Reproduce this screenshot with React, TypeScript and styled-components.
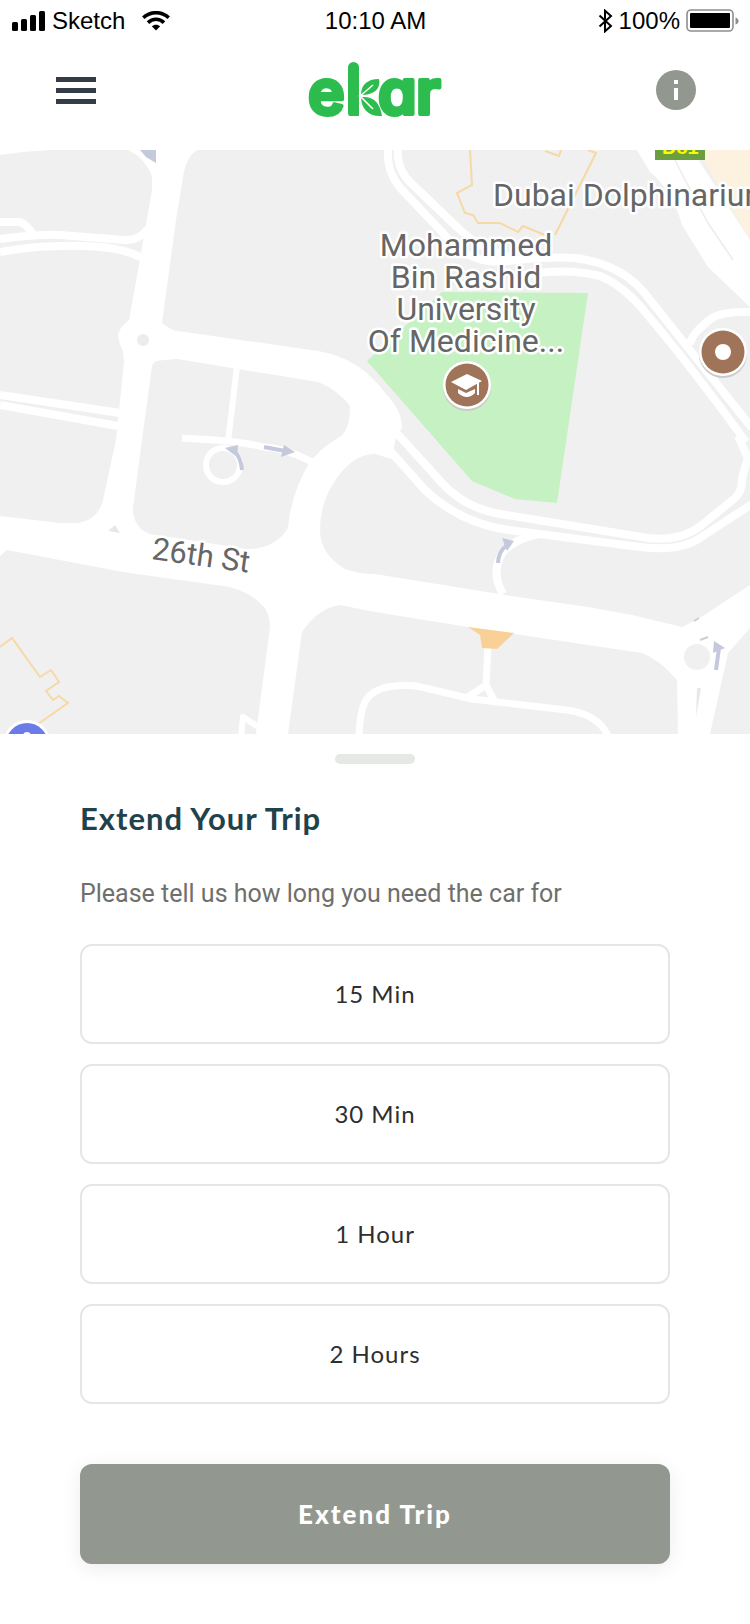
import React, { useState } from "react";
import styled, { createGlobalStyle, css } from "styled-components";

const color = {
  ink: "#2e2e2e",
  heading: "#1f424b",
  body: "#6f6f6c",
  brand: "#2dbc4e",
  muted: "#929790",
  line: "#e6e6e6",
  land: "#f0f0f0",
  road: "#ffffff",
  park: "#c5f1c3",
  arrow: "#c4c9dc",
  outline: "#f6d9a4",
  pin: "#a07458",
};

const GlobalStyle = createGlobalStyle`
  *, *::before, *::after { box-sizing: border-box; }
  body {
    margin: 0;
    background: #ffffff;
    color: ${color.ink};
    font-family: Lato, "Noto Sans", sans-serif;
  }
`;

const Screen = styled.div`
  display: flex;
  flex-direction: column;
  min-height: 100vh;
`;

const StatusBar = styled.div`
  display: grid;
  grid-template-columns: 1fr auto 1fr;
  align-items: center;
  height: 42px;
  padding: 0 11px 0 12px;
  color: #000000;
  font: 24px/42px "Liberation Sans", Arial, sans-serif;
`;

const StatusGroup = styled.div<{ $end?: boolean }>`
  display: flex;
  align-items: center;
  gap: 7px;
  ${(p) =>
    p.$end &&
    css`
      justify-content: flex-end;
      gap: 6px;
    `}
`;

const Carrier = styled.span`
  margin-right: 10px;
`;

const NavBar = styled.header`
  display: grid;
  grid-template-columns: 1fr auto 1fr;
  align-items: center;
  height: 108px;
  padding: 0 54px 12px;
`;

const IconButton = styled.button<{ $end?: boolean }>`
  display: flex;
  padding: 0;
  border: 0;
  background: none;
  cursor: pointer;
  justify-self: ${(p) => (p.$end ? "end" : "start")};
  margin-left: 2px;
`;

const LogoMark = styled.svg`
  display: block;
  overflow: visible;
`;

const Wordmark = styled.text`
  font-family: Inter, sans-serif;
  font-size: 62px;
  font-weight: 600;
  font-feature-settings: "cv11";
  fill: ${color.brand};
  stroke: ${color.brand};
  stroke-width: 4px;
  stroke-linejoin: round;
`;

const MapView = styled.svg`
  display: block;
  width: 100%;
  height: auto;
  background: ${color.land};
`;

const MapLabel = styled.text<{ $street?: boolean }>`
  font-family: Roboto, sans-serif;
  font-size: ${(p) => (p.$street ? 31 : 32)}px;
  fill: #666666;
  stroke: #ffffff;
  stroke-width: 5px;
  stroke-linejoin: round;
  paint-order: stroke;
`;

const RoadSign = styled.text`
  font-family: "Liberation Sans", Arial, sans-serif;
  font-size: 20px;
  font-weight: 700;
  fill: #fdf900;
`;

const Sheet = styled.main`
  display: flex;
  flex-direction: column;
  padding: 20px 80px 60px;
`;

const Handle = styled.div`
  align-self: center;
  width: 80px;
  height: 10px;
  border-radius: 5px;
  background: #e5e8e4;
`;

const Title = styled.h1`
  margin: 34px 0 0;
  color: ${color.heading};
  font-size: 31px;
  line-height: 40px;
  font-weight: 700;
  letter-spacing: 1px;
`;

const Prompt = styled.p`
  margin: 38px 0 0;
  color: ${color.body};
  font-family: Roboto, sans-serif;
  font-size: 25px;
  line-height: 36px;
`;

const Options = styled.div`
  display: flex;
  flex-direction: column;
  gap: 20px;
  margin-top: 32px;
`;

const buttonBase = css`
  height: 100px;
  border-radius: 12px;
  font-family: inherit;
  line-height: 32px;
  text-align: center;
  cursor: pointer;
`;

const OptionButton = styled.button`
  ${buttonBase}
  border: 2px solid ${color.line};
  background: #ffffff;
  color: ${color.ink};
  font-size: 24px;
  font-weight: 400;
  letter-spacing: 1px;

  &[aria-pressed="true"] {
    border-color: ${color.brand};
  }
`;

const SubmitButton = styled.button`
  ${buttonBase}
  margin-top: 60px;
  border: 0;
  background: ${color.muted};
  color: #ffffff;
  font-size: 26px;
  font-weight: 900;
  letter-spacing: 2px;
  box-shadow: 0 4px 20px rgba(0, 0, 0, 0.08);
`;

const SignalIcon = () => (
  <svg width="33" height="20" viewBox="0 0 33 20" aria-hidden="true">
    <rect x="0" y="11" width="6" height="9" rx="1.5" />
    <rect x="9" y="8" width="6" height="12" rx="1.5" />
    <rect x="18" y="4" width="6" height="16" rx="1.5" />
    <rect x="27" y="0" width="6" height="20" rx="1.5" />
  </svg>
);

const WifiIcon = () => (
  <svg width="28" height="20" viewBox="0 0 28 20" aria-hidden="true">
    <g fill="none" stroke="#000" strokeWidth="3.6">
      <path d="M1.3 6.8C8.5 0 19.5 0 26.7 6.8" />
      <path d="M6 11.6C10.5 7.2 17.5 7.2 22 11.6" />
    </g>
    <path d="M14 19.6L9.8 15.3C12.2 13.2 15.8 13.2 18.2 15.3Z" />
  </svg>
);

const BluetoothIcon = () => (
  <svg width="15" height="24" viewBox="0 0 15 24" aria-hidden="true">
    <path
      d="M1.5 6.5L13 17L7 22.3V1.7L13 7L1.5 17.5"
      fill="none"
      stroke="#000"
      strokeWidth="2"
    />
  </svg>
);

const BatteryIcon = () => (
  <svg width="53" height="24" viewBox="0 0 53 24" aria-hidden="true">
    <rect x="1" y="1" width="46" height="21" rx="4" fill="none" stroke="#8e8e8e" strokeWidth="1.6" />
    <rect x="4" y="4" width="40" height="15" rx="1" />
    <path d="M49.5 8.5Q52.5 9.5 52.5 12Q52.5 14.5 49.5 15.5Z" fill="#8e8e8e" />
  </svg>
);

const MenuIcon = () => (
  <svg width="40" height="27" viewBox="0 0 40 27" fill="#343c48" aria-hidden="true">
    <rect width="40" height="5" />
    <rect y="11" width="40" height="5" />
    <rect y="22" width="40" height="5" />
  </svg>
);

const InfoIcon = () => (
  <svg width="40" height="40" viewBox="0 0 40 40" aria-hidden="true">
    <circle cx="20" cy="20" r="20" fill={color.muted} />
    <rect x="18" y="10" width="4" height="4" fill="#fff" />
    <rect x="18" y="18" width="4" height="12" fill="#fff" />
  </svg>
);

const Logo = () => (
  <LogoMark width="136" height="58" viewBox="0 0 136 58" role="img" aria-label="ekar">
    <Wordmark x="1 39" y="53">
      ek
    </Wordmark>
    <rect x="52" y="2" width="30" height="56" fill="#fff" />
    <rect x="41" y="1" width="11" height="54" rx="5.5" fill={color.brand} />
    <g fill={color.brand}>
      <path d="M54 34C54 24 60 18 72 18C74 27 68 34 54 34Z" />
      <path d="M54 36C67 35 73 42 75 55C62 56 54 48 54 36Z" />
    </g>
    <path d="M52 36L66 24M52 34L66 48" stroke="#fff" strokeWidth="1.6" />
    <Wordmark x="71 109" y="53">
      ar
    </Wordmark>
  </LogoMark>
);

const CityMap = () => (
  <MapView viewBox="0 150 750 584" role="img" aria-label="Map around 26th St">
    <rect y="150" width="750" height="584" fill={color.land} />
    <path d="M442 292L588 293L557 503L515 499L472 481L367 361Z" fill={color.park} />

    <g fill={color.road}>
      <path d="M0 155Q25 151 50 150H0Z" />
      <path d="M128 150Q145 158 152 176V190L139 265L129 320Q118 328 118 337Q120 345 123 352L124 362L116 440L103 500Q98 520 78 523H60L0 516V556L7 550L123 572L230 587Q250 593 260 603Q270 611 270 627L256 734H288L302 632Q318 608 340 605L375 612L468 627L642 653Q660 660 677 680L678 734H710L728 653L750 628V585L712 610Q698 620 682 627L632 615L588 607L518 597L375 574Q358 574 345 569Q320 554 320 530Q320 495 345 468Q360 453 375 454L392 459L396 436L402 428Q402 410 385 393Q360 358 318 351L178 331Q170 330 162 323L176 220L183 177Q186 157 197 150Z" />
      <path d="M637 150L650 172Q672 190 682 225L708 267L750 307V240L692 150Z" />
    </g>
    <g fill={color.land}>
      <path d="M152 366Q153 360 165 360L177 359L318 382Q338 390 350 406Q350 432 338 438Q320 448 308 465Q291 495 288 528Q275 549 247 549L150 534Q133 528 133 508L142 440Z" />
      <circle cx="143" cy="340" r="6" fill="#ececec" />
      <circle cx="697" cy="657" r="13" />
      <path d="M697 688H701L696 717Z" fill="#e8e8e8" />
      <path d="M108 531L115 525L120 533Z" fill="#e8e8e8" />
    </g>
    <path d="M698 150H750V240Z" fill="#fdf2e0" />
    <path d="M675 160Q690 190 708 223L733 260" fill="none" stroke="#ececec" strokeWidth="1.5" />

    <g fill="none" stroke={color.road} strokeWidth="8" strokeLinejoin="round">
      <path d="M0 222H20Q26 224 34 235" />
      <path d="M0 239Q40 234 60 235L125 240Q138 241 148 229" />
      <path d="M0 252Q50 243 100 247Q125 249 143 258" />
      <path d="M0 395L120 413M0 405L118 426" />
      <path d="M237 366L228 442" strokeWidth="6" />
      <path d="M182 438L215 440Q250 443 263 447Q285 448 312 462" strokeWidth="7" />
      <circle cx="223" cy="465" r="17" strokeWidth="6" />
      <path d="M388 148Q386 175 405 193L442 232Q465 262 500 262Q545 256 575 258Q625 264 650 300L752 428" />
      <path d="M398 148Q396 170 412 184L458 228Q480 250 520 260" />
      <path d="M510 278Q560 266 600 276Q624 286 645 312Q690 365 746 442" />
      <path d="M690 345Q690 335 712 318Q724 311 752 312" />
      <path d="M394 430L442 483Q465 508 500 514L648 538Q680 542 702 525L735 498Q743 490 742 478L748 458L738 436" />
      <path d="M384 444L425 490Q460 523 508 530L640 547Q680 552 700 538L752 504" />
      <path d="M503 594Q490 572 503 552Q515 538 540 534" />
      <path d="M359 736Q360 710 366 700Q374 688 395 686Q412 684 425 688L472 699L558 709Q598 712 608 736" strokeWidth="7" />
      <path d="M488 645L486 685L468 697M486 685L494 700" strokeWidth="7" />
      <path d="M241 736L243 717L260 728" strokeWidth="6" />
    </g>

    <path d="M468 627L514 633L497 649L482 648L480 635Z" fill="#f9d197" />
    <g fill="none" stroke={color.outline} strokeWidth="2">
      <path d="M470 150L472 185L457 193L465 213L473 215L478 223H500L518 232L523 226L545 235" />
      <path d="M555 235L596 153L588 150M545 151L559 156L561 150" />
      <path d="M0 647L12 638L40 677L51 670L59 682L46 691L53 700L59 696L68 703L38 724" />
    </g>
    <g fill={color.arrow}>
      <path d="M140 150H156V163L146 157Z" />
      <path d="M225 448L238 445L237 457Z" />
      <path d="M284 445L295 452L281 457Z" />
      <path d="M502 538L514 541L507 551Z" />
      <path d="M714 641L725 648L713 653Z" />
    </g>
    <g fill="none" stroke={color.arrow} strokeWidth="4">
      <path d="M242 470Q241 458 234 450" />
      <path d="M264 447L285 451" />
      <path d="M498 563Q498 552 507 545" />
      <path d="M716 670L719 648" />
      <path d="M694 621L699 618M700 640L708 637" strokeWidth="2" stroke="#cfcfcf" />
    </g>

    <rect x="655" y="146" width="50" height="14" fill="#6a9e3f" />
    <RoadSign x="662" y="154">
      D81
    </RoadSign>
    <MapLabel x="493" y="206">
      Dubai Dolphinarium
    </MapLabel>
    <MapLabel textAnchor="middle">
      <tspan x="466" y="256">Mohammed</tspan>
      <tspan x="466" y="288">Bin Rashid</tspan>
      <tspan x="466" y="320">University</tspan>
      <tspan x="466" y="352">Of Medicine...</tspan>
    </MapLabel>
    <MapLabel $street x="151" y="559" transform="rotate(8 151 559)">
      26th St
    </MapLabel>

    <circle cx="467" cy="387" r="24" fill="#c9c9c9" />
    <circle cx="467" cy="385" r="24" fill="#fff" />
    <circle cx="467" cy="385" r="21.5" fill={color.pin} />
    <g fill="#fff">
      <path d="M451 382L467 374L482 381L466 390Z" />
      <path d="M458 389L466 393L475 389V393Q467 401 458 393Z" />
      <rect x="477" y="382" width="2" height="13" />
    </g>
    <circle cx="723" cy="354" r="24" fill="#c9c9c9" />
    <circle cx="723" cy="352" r="24" fill="#fff" />
    <circle cx="723" cy="352" r="21.5" fill={color.pin} />
    <circle cx="723" cy="352" r="8" fill="#fff" />
    <circle cx="27" cy="744" r="24" fill="#fff" />
    <circle cx="27" cy="744" r="21" fill="#6b7ce8" />
    <circle cx="27" cy="736" r="4" fill="#fff" />
  </MapView>
);

const durations = ["15 Min", "30 Min", "1 Hour", "2 Hours"];

export default function App() {
  const [selected, setSelected] = useState<string | null>(null);

  return (
    <Screen>
      <GlobalStyle />
      <StatusBar>
        <StatusGroup>
          <SignalIcon />
          <Carrier>Sketch</Carrier>
          <WifiIcon />
        </StatusGroup>
        <span>10:10 AM</span>
        <StatusGroup $end>
          <BluetoothIcon />
          <span>100%</span>
          <BatteryIcon />
        </StatusGroup>
      </StatusBar>
      <NavBar>
        <IconButton type="button" aria-label="Menu">
          <MenuIcon />
        </IconButton>
        <Logo />
        <IconButton type="button" aria-label="Information" $end>
          <InfoIcon />
        </IconButton>
      </NavBar>
      <CityMap />
      <Sheet>
        <Handle />
        <Title>Extend Your Trip</Title>
        <Prompt>Please tell us how long you need the car for</Prompt>
        <Options role="group" aria-label="Trip duration">
          {durations.map((label) => (
            <OptionButton
              key={label}
              type="button"
              aria-pressed={selected === label}
              onClick={() => setSelected(label)}
            >
              {label}
            </OptionButton>
          ))}
        </Options>
        <SubmitButton type="button">Extend Trip</SubmitButton>
      </Sheet>
    </Screen>
  );
}
